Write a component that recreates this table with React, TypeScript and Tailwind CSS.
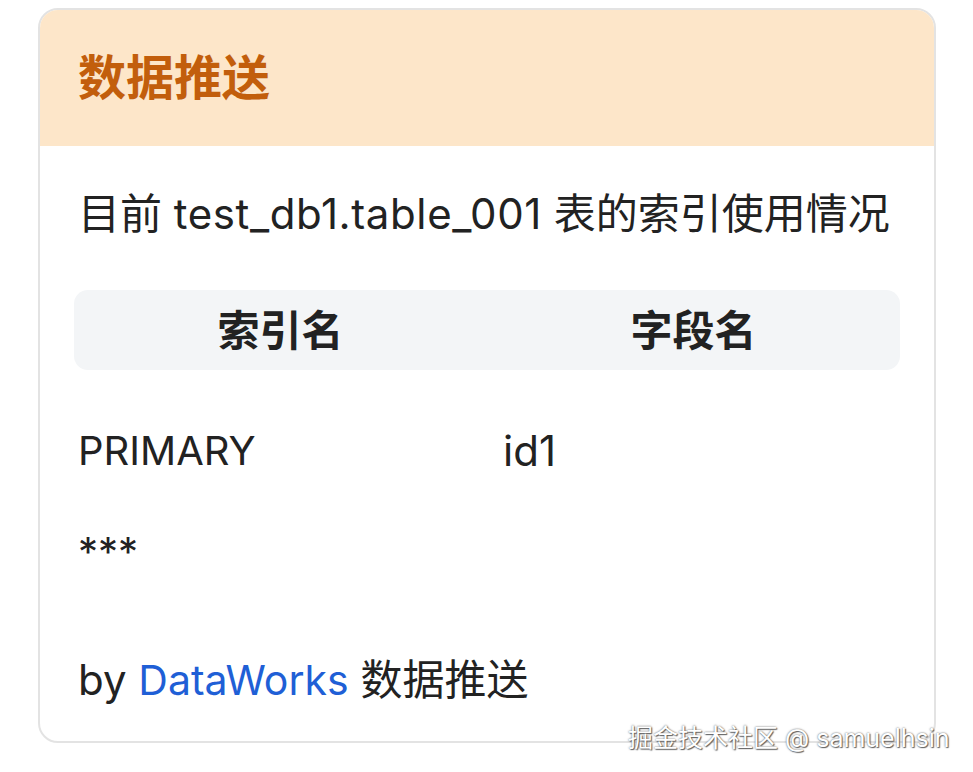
import React from "react";

const font = {
  fontFamily: '"Inter", "Noto Sans CJK SC", sans-serif',
};

export default function App() {
  return (
    <div
      className="relative w-[973px] h-[772px] bg-white overflow-hidden text-[#222222]"
      style={font}
    >
      <div className="ml-[38px] mt-[8px] w-[898px] h-[735px] border-2 border-[#e3e3e3] rounded-[20px] overflow-hidden flex flex-col">
        <div className="h-[136px] bg-[#fde6c9] flex items-center pl-[38px]">
          <h1 className="text-[48px] font-bold leading-none text-[#c25e0c]">数据推送</h1>
        </div>
        <div className="px-[34px] flex flex-col">
          <p className="mt-[38px] pl-[4px] text-[42px] leading-[60px] whitespace-nowrap">
            目前 <span className="tracking-[0.6px]">test_db1.table_001</span> 表的索引使用情况
          </p>
          <div className="mt-[46px] h-[80px] rounded-[14px] bg-[#f3f5f7] grid grid-cols-2 items-center">
            <div className="text-center text-[42px] font-bold">索引名</div>
            <div className="text-center text-[42px] font-bold">字段名</div>
          </div>
          <div className="mt-[51px] grid grid-cols-2 text-[42px] leading-[60px]">
            <div className="pl-[4px] text-[40px]">PRIMARY</div>
            <div className="pl-[16px]">id1</div>
          </div>
          <p className="mt-[41px] pl-[4px] text-[40px] leading-[60px]">***</p>
          <p className="mt-[68px] pl-[4px] text-[42px] leading-[60px] whitespace-nowrap">
            by <span className="text-[#1f5fd6] text-[41px]">DataWorks</span> 数据推送
          </p>
        </div>
      </div>
      <div
        className="absolute left-[628px] top-[721px] text-[25px] leading-[34px] text-white whitespace-nowrap"
        style={{ textShadow: "0 0 2px #555, 1px 1px 1px #666" }}
      >
        掘金技术社区 @ samuelhsin
      </div>
    </div>
  );
}
